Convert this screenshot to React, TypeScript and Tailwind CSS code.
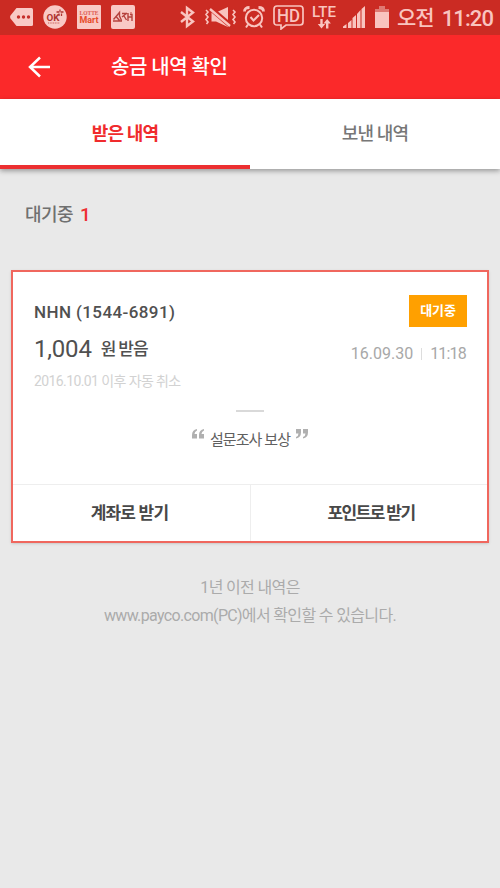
import React from 'react'

const font = "font-[Roboto,'Noto_Sans_CJK_KR',sans-serif]"

function NotificationIcons() {
  return (
    <div className="flex items-center gap-2.5 text-[#f9c9c5]">
      <svg width="23" height="18" viewBox="0 0 23 18" fill="currentColor">
        <path d="M6.5 0H21.500Q23 0 23 1.500V16.500Q23 18 21.500 18H6.500L.5 10.500Q-.3 9 .5 7.500Z" />
        <g fill="#c62f2b">
          <circle cx="8.500" cy="9" r="1.700" />
          <circle cx="13.500" cy="9" r="1.700" />
          <circle cx="18.500" cy="9" r="1.700" />
        </g>
      </svg>
      <svg width="24" height="24" viewBox="0 0 24 24">
        <circle cx="12" cy="12" r="11.700" fill="currentColor" />
        <text x="3.500" y="15.700" textLength="13" lengthAdjust="spacingAndGlyphs" fontSize="9.500" fontWeight="700" fontFamily="Roboto, sans-serif" fill="#ad3531">OK</text>
        <path d="M17 4.500v3M13.500 7h2.500M20.500 7H18M16 8.500v2.500M18.500 8.500v2.500" stroke="#ad3531" strokeWidth="1.300" />
        <path d="M5 18h12" stroke="#c65d58" strokeWidth="1.200" strokeDasharray="1 .7" />
      </svg>
      <svg width="24" height="24" viewBox="0 0 24 24">
        <rect width="24" height="24" rx="1" fill="currentColor" />
        <text x="2.500" y="9.700" textLength="19" lengthAdjust="spacingAndGlyphs" fontSize="5.500" fontWeight="700" fontFamily="Liberation Serif, serif" fill="#dc5950">LOTTE</text>
        <text x="2.500" y="17.500" textLength="19" lengthAdjust="spacingAndGlyphs" fontSize="8.500" fontWeight="700" fontFamily="Roboto, sans-serif" fill="#e64b2a">Mart</text>
      </svg>
      <svg width="24" height="24" viewBox="0 0 24 24" fill="none">
        <rect width="24" height="24" rx="2" fill="currentColor" />
        <g stroke="#b6423d" strokeWidth="1.400">
          <path d="M2.500 14.500L8.500 7.500V11L10.500 15.500M5.500 12L8.500 15.500M2 16H11M11 8.500H16M11 12L16 8M13 11L15.500 15M17 8V16M17 12H21M19 9.500H21V16" />
        </g>
        <circle cx="20" cy="8" r="1" fill="#d8746e" />
      </svg>
    </div>
  )
}

function SystemIcons() {
  return (
    <div className="flex items-center text-[#f9c4bf]">
      <svg className="mr-2" width="17" height="24" viewBox="0 0 17 24" fill="none" stroke="currentColor" strokeWidth="2.400">
        <path d="M2 7L14 16.500L8 21V3L14 7.500L2 17" />
      </svg>
      <svg className="mr-1.5" width="33" height="22" viewBox="0 0 33 22" fill="none">
        <path d="M7.500 6.500H12L24 1V21L12 15.500H7.500Z" fill="currentColor" />
        <path d="M5 1L27 20" stroke="#cb2b23" strokeWidth="5" />
        <path d="M6 3L26 20" stroke="currentColor" strokeWidth="2.400" />
        <path d="M2 4l2 2-2 2.500 2 2.500-2 2.500 2 2.500-1.500 2M29 4l2 2-2 2.500 2 2.500-2 2.500 2 2.500-1.500 2" stroke="currentColor" strokeWidth="1.600" />
      </svg>
      <svg className="mr-2" width="22" height="24" viewBox="0 0 22 24" fill="none" stroke="currentColor" strokeWidth="2">
        <circle cx="11" cy="13" r="8.200" />
        <path d="M7.500 12L10.500 15.500L16 10M5 19.500L3 22.500M17 19.500L19 22.500" />
        <path d="M1.500 6.500Q1.500 2.500 6.500 2.500M15.500 2.500Q20.500 2.500 20.500 6.500" strokeWidth="2.800" />
      </svg>
      <svg className="mr-2" width="31" height="26" viewBox="0 0 31 26" fill="none">
        <path d="M4 2H27Q30 2 30 5V18Q30 21 27 21H13L8 25V21H4Q1 21 1 18V5Q1 2 4 2Z" stroke="currentColor" strokeWidth="1.700" />
        <text x="4" y="18" textLength="23" lengthAdjust="spacingAndGlyphs" fontFamily="Roboto, sans-serif" fontSize="18" fontWeight="500" fill="currentColor">HD</text>
      </svg>
      <svg className="mr-1.5" width="25" height="26" viewBox="0 0 25 26">
        <text x="0" y="13" textLength="24" lengthAdjust="spacingAndGlyphs" fontFamily="Roboto, sans-serif" fontSize="14.500" fontWeight="500" fill="currentColor">LTE</text>
        <path d="M8.300 15h2.400v5h2.500L9.500 24.500 5.800 20h2.500ZM14 24.500h2.400v-5h2.500L15.200 15 11.500 19.500H14Z" fill="currentColor" />
      </svg>
      <svg className="mr-2.5" width="22" height="22" viewBox="0 0 22 22" fill="currentColor">
        <path d="M0 22V20.500L3.500 18V22ZM5 22V17L8.500 14V22ZM9.500 22V12L13 9V22ZM14 22V8L17.500 4V22ZM18.500 22V3L22 0V22Z" />
      </svg>
      <svg className="mr-2" width="14" height="22" viewBox="0 0 14 22">
        <path d="M4 0H10V3H14V7H0V3H4Z" fill="#df7972" />
        <path d="M0 6H14V22H0Z" fill="currentColor" />
      </svg>
      <span className="flex w-[96px] items-center justify-between pt-1 text-[22px] leading-none font-medium whitespace-nowrap">
        <span className="text-[21px] tracking-[-1px]">오전</span>
        <span className="tracking-[-0.9px]">11:20</span>
      </span>
    </div>
  )
}

export default function App() {
  return (
    <div className={`${font} flex h-[888px] w-[500px] flex-col overflow-hidden bg-[#e9e9e9] text-[#505050]`}>
      {/* Status bar */}
      <div className="flex h-[35px] shrink-0 items-center justify-between bg-[#cb2b23] pr-[7px] pb-0.5 pl-2.5">
        <NotificationIcons />
        <SystemIcons />
      </div>

      {/* App bar */}
      <header className="flex h-16 shrink-0 items-center bg-[#fb292a] pl-7 text-white">
        <svg width="23" height="22" viewBox="0 0 23 22" fill="none" stroke="currentColor" strokeWidth="2.500">
          <path d="M12 1.500L2 11L12 20.500M2 11H22" />
        </svg>
        <h1 className="ml-[60px] text-[20px] leading-none font-medium tracking-[-0.5px]">송금 내역 확인</h1>
      </header>

      {/* Tabs */}
      <nav className="grid h-[70px] shrink-0 grid-cols-2 bg-white text-[18px] leading-none font-medium tracking-[-0.8px] shadow-[0_2px_5px_rgba(0,0,0,0.35)]">
        <button className="border-b-4 border-[#ec2f31] pt-1 font-bold text-[#f02b2d]">받은 내역</button>
        <button className="border-b-4 border-transparent pt-1 text-[#777777]">보낸 내역</button>
      </nav>

      <main className="px-[11px]">
        <div className="flex items-center pt-9 pl-3.5 text-[18px] leading-5 font-medium text-[#707070]">
          <span className="tracking-[-0.6px]">대기중</span>
          <span className="ml-[7px] text-[19px] text-[#ee3033]">1</span>
        </div>

        <section className="mt-[45px] flex h-[273px] flex-col border-2 border-[#f0675e] bg-white shadow-sm">
          <div className="flex flex-1 flex-col pt-[23px] pr-5 pl-[21px]">
            <div className="flex items-start justify-between">
              <p className="pt-[7px] text-[17px] leading-5 font-medium tracking-[0.4px]">NHN (1544-6891)</p>
              <span className="flex h-8 w-[58px] items-center justify-center bg-[#ffa000] text-[13px] font-bold tracking-[-0.2px] text-white">대기중</span>
            </div>
            <div className="mt-1.5 flex h-8 items-center justify-between">
              <p className="flex items-center whitespace-nowrap">
                <span className="text-[24px] leading-none tracking-[-0.2px]">1,004</span>
                <span className="ml-[9px] text-[17px] leading-none font-medium tracking-[-1.1px]">원 받음</span>
              </p>
              <p className="flex items-center pt-2.5 pr-px text-[16px] leading-none text-[#a8a8a8]">
                <span>16.09.30</span>
                <span className="mr-2 ml-2 h-3 w-px bg-[#dddddd]" />
                <span className="tracking-[-0.8px]">11:18</span>
              </p>
            </div>
            <p className="mt-1.5 text-[14px] leading-5 tracking-[-0.6px] text-[#d2d2d2]">2016.10.01 이후 자동 취소</p>
            <div className="mt-[19px] mr-px flex flex-col items-center">
              <div className="h-0.5 w-7 bg-[#d9d9d9]" />
              <div className="mt-[17px] flex justify-center text-[#b0b0b0]">
                <svg width="13" height="10" viewBox="0 0 13 10" fill="currentColor">
                  <path d="M5 0Q0 1 0 6V9.500H5V5H2.500Q2.500 2.500 5 1.500ZM12 0Q7 1 7 6V9.500H12V5H9.500Q9.500 2.500 12 1.500Z" />
                </svg>
                <span className="mr-[5px] ml-[5px] text-[15px] leading-[22px] tracking-[-0.9px] text-[#606060]">설문조사 보상</span>
                <svg width="13" height="10" viewBox="0 0 13 10" fill="currentColor">
                  <path d="M1 9.500Q6 8.500 6 3.500V0H1V4.500H3.500Q3.500 7 1 8ZM8 9.500Q13 8.500 13 3.500V0H8V4.500H10.500Q10.500 7 8 8Z" />
                </svg>
              </div>
            </div>
          </div>
          <div className="grid h-[57px] grid-cols-2 border-t border-[#eeeeee] pt-px text-[17px] font-bold text-[#484848]">
            <button className="pr-1 tracking-[-0.8px]">계좌로 받기</button>
            <button className="-mt-px border-l border-[#eeeeee] pt-px pl-1 tracking-[-1.6px]">포인트로 받기</button>
          </div>
        </section>

        <p className="mt-[31px] text-center text-[16px] leading-7 tracking-[-0.65px] whitespace-nowrap text-[#ababab]">
          1년 이전 내역은<br />
          www.payco.com(PC)에서 확인할 수 있습니다.
        </p>
      </main>
    </div>
  )
}
